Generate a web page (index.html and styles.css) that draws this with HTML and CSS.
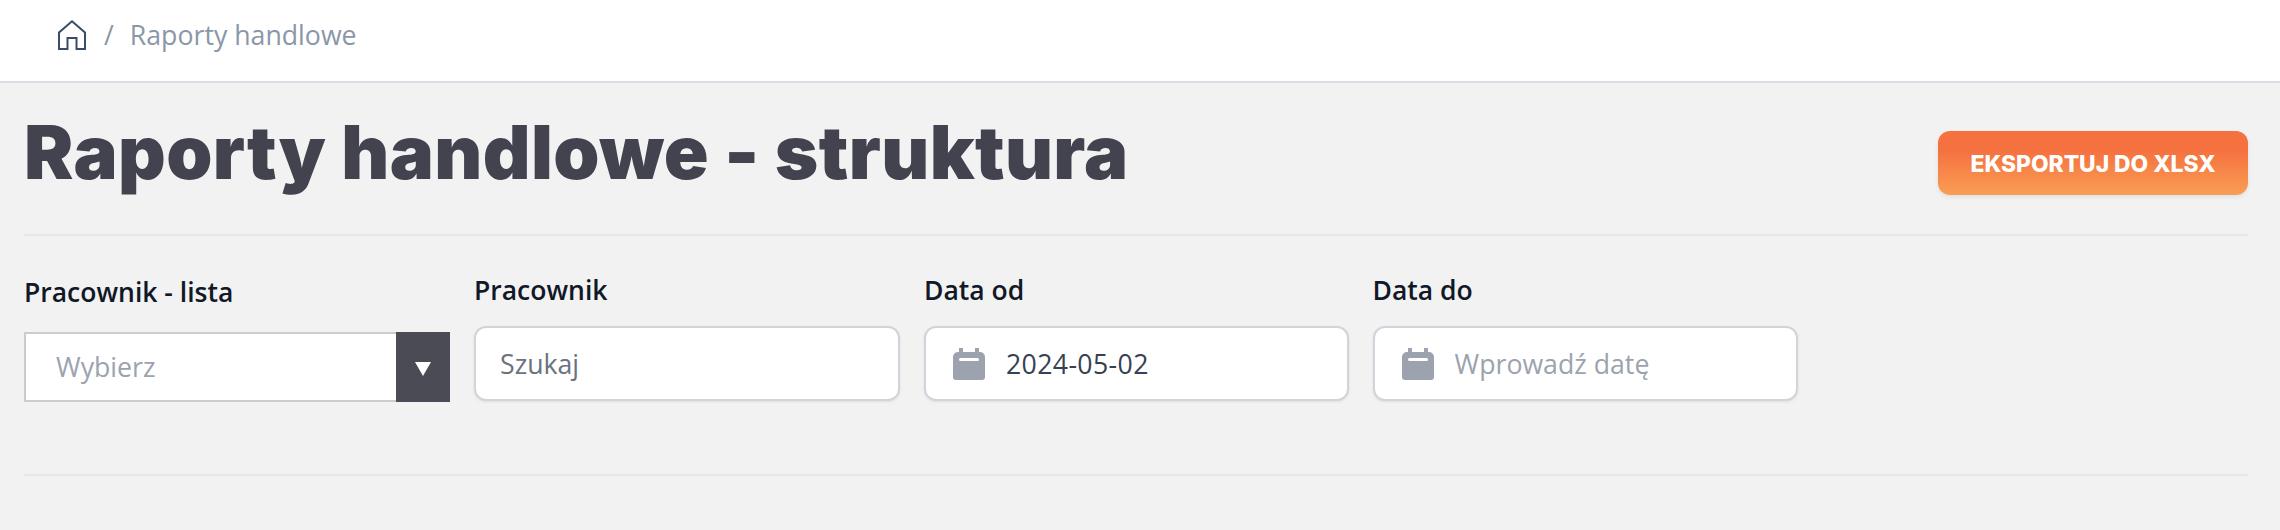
FILE: index.html
```html
<!DOCTYPE html>
<html lang="pl">
<head>
    <meta charset="UTF-8">
    <meta name="viewport" content="width=device-width, initial-scale=1.0">
    <title>Raporty handlowe - struktura</title>
    <link rel="stylesheet" href="styles.css">
</head>
<body>
    <nav class="breadcrumb">
        <svg class="home-icon" viewBox="0 0 28 30" width="28" height="30" fill="none" stroke="#3b4c68" stroke-width="2">
            <path d="M1 29V12.500L14 1.300L27 12.500V29H18.500V18H9.500V29Z"/>
        </svg>
        <span class="crumb-sep">/</span>
        <span class="crumb">Raporty handlowe</span>
    </nav>

    <main class="content">
        <div class="title-row">
            <h1>Raporty handlowe - struktura</h1>
            <button class="export-btn" type="button">EKSPORTUJ DO XLSX</button>
        </div>

        <form class="filters">
            <div class="field field-select">
                <label>Pracownik - lista</label>
                <div class="select-box">
                    <span class="select-value">Wybierz</span>
                    <span class="select-arrow"></span>
                </div>
            </div>
            <div class="field">
                <label for="employee">Pracownik</label>
                <input class="text-input" id="employee" type="text" placeholder="Szukaj">
            </div>
            <div class="field">
                <label for="date-from">Data od</label>
                <div class="date-input">
                    <svg class="calendar-icon" viewBox="0 0 32 32" width="32" height="32">
                        <path fill="#9ca3af" d="M6 0h4v4h12V0h4v4h1a5 5 0 0 1 5 5v20a3 3 0 0 1-3 3H3a3 3 0 0 1-3-3V9a5 5 0 0 1 5-5h1Z"/>
                        <rect x="6" y="10" width="20" height="3" rx="1.500" fill="#fff"/>
                    </svg>
                    <input class="date-filled" id="date-from" type="text" value="2024-05-02" placeholder="Wprowadź datę">
                </div>
            </div>
            <div class="field">
                <label for="date-to">Data do</label>
                <div class="date-input">
                    <svg class="calendar-icon" viewBox="0 0 32 32" width="32" height="32">
                        <path fill="#9ca3af" d="M6 0h4v4h12V0h4v4h1a5 5 0 0 1 5 5v20a3 3 0 0 1-3 3H3a3 3 0 0 1-3-3V9a5 5 0 0 1 5-5h1Z"/>
                        <rect x="6" y="10" width="20" height="3" rx="1.500" fill="#fff"/>
                    </svg>
                    <input id="date-to" type="text" placeholder="Wprowadź datę">
                </div>
            </div>
        </form>
    </main>
</body>
</html>
```

FILE: styles.css
```css
* {
    box-sizing: border-box;
}

html, body {
    height: 100%;
}

body {
    margin: 0;
    background: #f2f2f2;
    font-family: 'Open Sans', 'Noto Sans', sans-serif;
    overflow: hidden;
}

.breadcrumb {
    display: flex;
    align-items: center;
    height: 83px;
    padding: 0 0 12px 58px;
    background: #fff;
    border-bottom: 2px solid #d9dde3;
    font-size: 26.7px;
    color: #8a97a8;
}

.crumb-sep {
    margin: 0 16px 0 18px;
}

.content {
    padding: 0 32px 0 24px;
}

.title-row {
    display: flex;
    justify-content: space-between;
    height: 153px;
    border-bottom: 2px solid #e6e6ec;
}

h1 {
    margin: 23px 0 0;
    font-family: 'Inter', sans-serif;
    font-size: 74px;
    font-weight: 900;
    line-height: 92px;
    letter-spacing: 0.4px;
    color: #42434f;
}

.export-btn {
    align-self: flex-start;
    width: 310px;
    height: 64px;
    margin-top: 48px;
    border: none;
    border-radius: 12px;
    background: linear-gradient(180deg, #f5713f 0%, #f5713f 30%, #f99e55 100%);
    box-shadow: 0 2px 4px rgba(0, 0, 0, 0.08);
    color: #fff;
    font-family: 'Inter', sans-serif;
    font-size: 22.8px;
    font-weight: 800;
}

.filters {
    display: grid;
    grid-template-columns: 426px 426px 424.5px 425px;
    column-gap: 24px;
    height: 240px;
    padding-top: 35px;
    border-bottom: 2px solid #e6e6ec;
}

.field label {
    display: block;
    height: 38px;
    margin-bottom: 17px;
    font-size: 26.5px;
    font-weight: 600;
    line-height: 38px;
    color: #111827;
}

.field-select {
    padding-top: 2px;
}

.field-select label {
    margin-bottom: 21px;
}

.select-box {
    display: flex;
    justify-content: space-between;
    height: 70px;
    background: #fff;
    border: 2px solid #cccccf;
    border-right: none;
}

.select-value {
    padding-left: 30px;
    font-size: 26.7px;
    line-height: 66px;
    color: #9ca3af;
}

.select-arrow {
    position: relative;
    width: 54px;
    margin: -2px 0;
    background: #4b4b55;
}

.select-arrow::after {
    content: "";
    position: absolute;
    top: 30px;
    left: 19px;
    border-left: 8px solid transparent;
    border-right: 8px solid transparent;
    border-top: 14px solid #fff;
}

.text-input, .date-input {
    width: 100%;
    height: 75px;
    background: #fff;
    border: 2px solid #d1d5db;
    border-radius: 12px;
    box-shadow: 0 1px 3px rgba(0, 0, 0, 0.08);
}

.text-input {
    padding: 0 24px;
    font-family: inherit;
    font-size: 26.7px;
    color: #374151;
}

.text-input::placeholder {
    color: #6b7280;
    opacity: 1;
}

.date-input {
    display: flex;
    align-items: center;
    padding-left: 27px;
}

.calendar-icon {
    flex: none;
    margin-right: 21px;
}

.date-input input {
    flex: 1;
    min-width: 0;
    padding: 0;
    border: none;
    outline: none;
    background: transparent;
    font-family: inherit;
    font-size: 26.7px;
    color: #374151;
}

.date-input .date-filled {
    letter-spacing: 0.35px;
}

.date-input input::placeholder {
    color: #9ca3af;
    opacity: 1;
}
```
